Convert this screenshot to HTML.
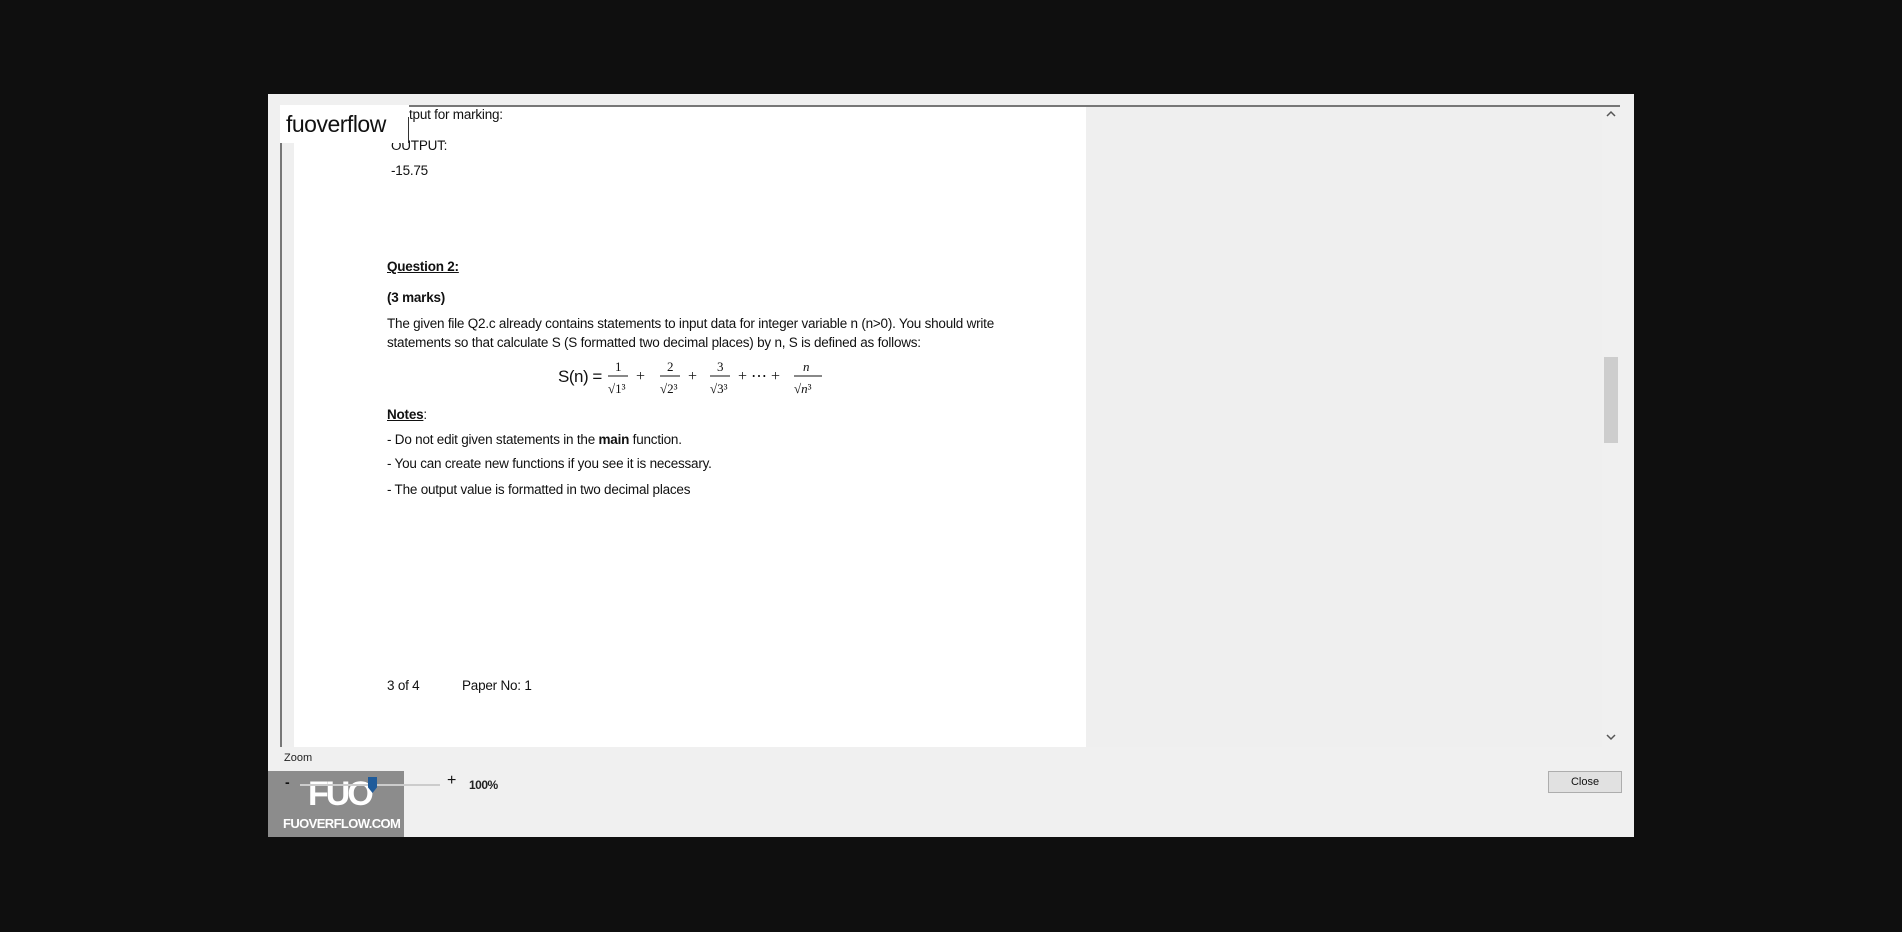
<!DOCTYPE html>
<html><head><meta charset="utf-8"><style>
body{margin:0;width:1902px;height:932px;background:#0f0f0f;position:relative;overflow:hidden;font-family:"Liberation Sans",sans-serif}
.a{position:absolute;white-space:nowrap}
.t{position:absolute;white-space:nowrap;font-size:13.5px;letter-spacing:-0.22px;color:#111;line-height:18px}
b{font-weight:bold}
u{text-decoration:underline}
</style></head><body>
<div class="a" style="left:268px;top:94px;width:1366px;height:743px;background:#f0f0f0"></div>
<div class="a" style="left:280px;top:105px;width:1340px;height:642px;background:#efefef;border-top:2px solid #777;border-left:2px solid #777;box-sizing:border-box"></div>
<div class="a" style="left:294px;top:107px;width:793px;height:640px;background:#fff"></div>
<div class="a" style="left:1086px;top:107px;width:516px;height:640px;background:#efefef"></div>
<div class="a" style="left:1602px;top:107px;width:18px;height:640px;background:#f0f0f0"></div>
<div class="a" style="left:1604px;top:357px;width:14px;height:86px;background:#cdcdcd"></div>
<svg class="a" style="left:1605px;top:110px" width="12" height="8"><path d="M2 6 L6 2 L10 6" stroke="#555" stroke-width="1.5" fill="none"/></svg>
<svg class="a" style="left:1605px;top:733px" width="12" height="8"><path d="M2 2 L6 6 L10 2" stroke="#555" stroke-width="1.5" fill="none"/></svg>
<div class="t" style="left:409px;top:106px">tput for marking:</div>
<div class="t" style="left:391px;top:137px">OUTPUT:</div>
<div class="t" style="left:391px;top:162px">-15.75</div>
<div class="t" style="left:387px;top:258px"><b><u>Question 2:</u></b></div>
<div class="t" style="left:387px;top:289px"><b>(3 marks)</b></div>
<div class="t" style="left:387px;top:315px">The given file Q2.c already contains statements to input data for integer variable n (n&gt;0). You should write</div>
<div class="t" style="left:387px;top:334px">statements so that calculate S (S formatted two decimal places) by n, S is defined as follows:</div>
<div class="a" style="left:558px;top:360px;font-size:17px;color:#111;letter-spacing:-0.5px;line-height:34px">S(n) =</div>
<svg class="a" style="left:606px;top:356px" width="220" height="44" font-family="Liberation Serif,serif" font-size="13" fill="#111">
<g stroke="#111" stroke-width="1"><line x1="2" y1="20" x2="22" y2="20"/><line x1="54" y1="20" x2="74" y2="20"/><line x1="104" y1="20" x2="124" y2="20"/><line x1="188" y1="20" x2="216" y2="20"/></g>
<text x="9" y="15">1</text><text x="61" y="15">2</text><text x="111" y="15">3</text><text x="197" y="15" font-style="italic">n</text>
<text x="2" y="37">√1³</text><text x="54" y="37">√2³</text><text x="104" y="37">√3³</text><text x="188" y="37">√<tspan font-style="italic">n</tspan>³</text>
<text x="30" y="25" font-size="16">+</text><text x="82" y="25" font-size="16">+</text><text x="132" y="25" font-size="16">+ ⋯ +</text>
</svg>
<div class="t" style="left:387px;top:406px"><b><u>Notes</u></b>:</div>
<div class="t" style="left:387px;top:431px">- Do not edit given statements in the <b>main</b> function.</div>
<div class="t" style="left:387px;top:455px">- You can create new functions if you see it is necessary.</div>
<div class="t" style="left:387px;top:481px">- The output value is formatted in two decimal places</div>
<div class="t" style="left:387px;top:677px">3 of 4</div>
<div class="t" style="left:462px;top:677px">Paper No: 1</div>
<div class="a" style="left:280px;top:105px;width:129px;height:38px;background:#fff"></div>
<div class="a" style="left:286px;top:111px;font-size:23px;color:#111;letter-spacing:-0.5px">fuoverflow</div>
<div class="a" style="left:408px;top:117px;width:1px;height:26px;background:#333"></div>
<div class="a" style="left:284px;top:752px;font-size:11px;color:#222">Zoom</div>
<div class="a" style="left:268px;top:771px;width:136px;height:66px;background:#8c8c8c"></div>
<div class="a" style="left:308px;top:775px;font-size:34px;font-weight:bold;color:#fff;letter-spacing:-3px">FUO</div>
<div class="a" style="left:283px;top:816px;font-size:13px;font-weight:bold;color:#fff;letter-spacing:-0.6px">FUOVERFLOW.COM</div>
<div class="a" style="left:285px;top:774px;font-size:14px;font-weight:bold;color:#111">-</div>
<div class="a" style="left:300px;top:784px;width:140px;height:2px;background:#ccc"></div>
<div class="a" style="left:368px;top:777px;width:9px;height:16px;background:#1f5b9a;clip-path:polygon(0 0,100% 0,100% 65%,50% 100%,0 65%)"></div>
<div class="a" style="left:447px;top:772px;font-size:16px;color:#111">+</div>
<div class="a" style="left:469px;top:778px;font-size:12px;font-weight:bold;color:#222;letter-spacing:-0.5px">100%</div>
<div class="a" style="left:1548px;top:771px;width:72px;height:20px;background:#e1e1e1;border:1px solid #adadad;font-size:11px;text-align:center;line-height:20px;color:#111">Close</div>
</body></html>
